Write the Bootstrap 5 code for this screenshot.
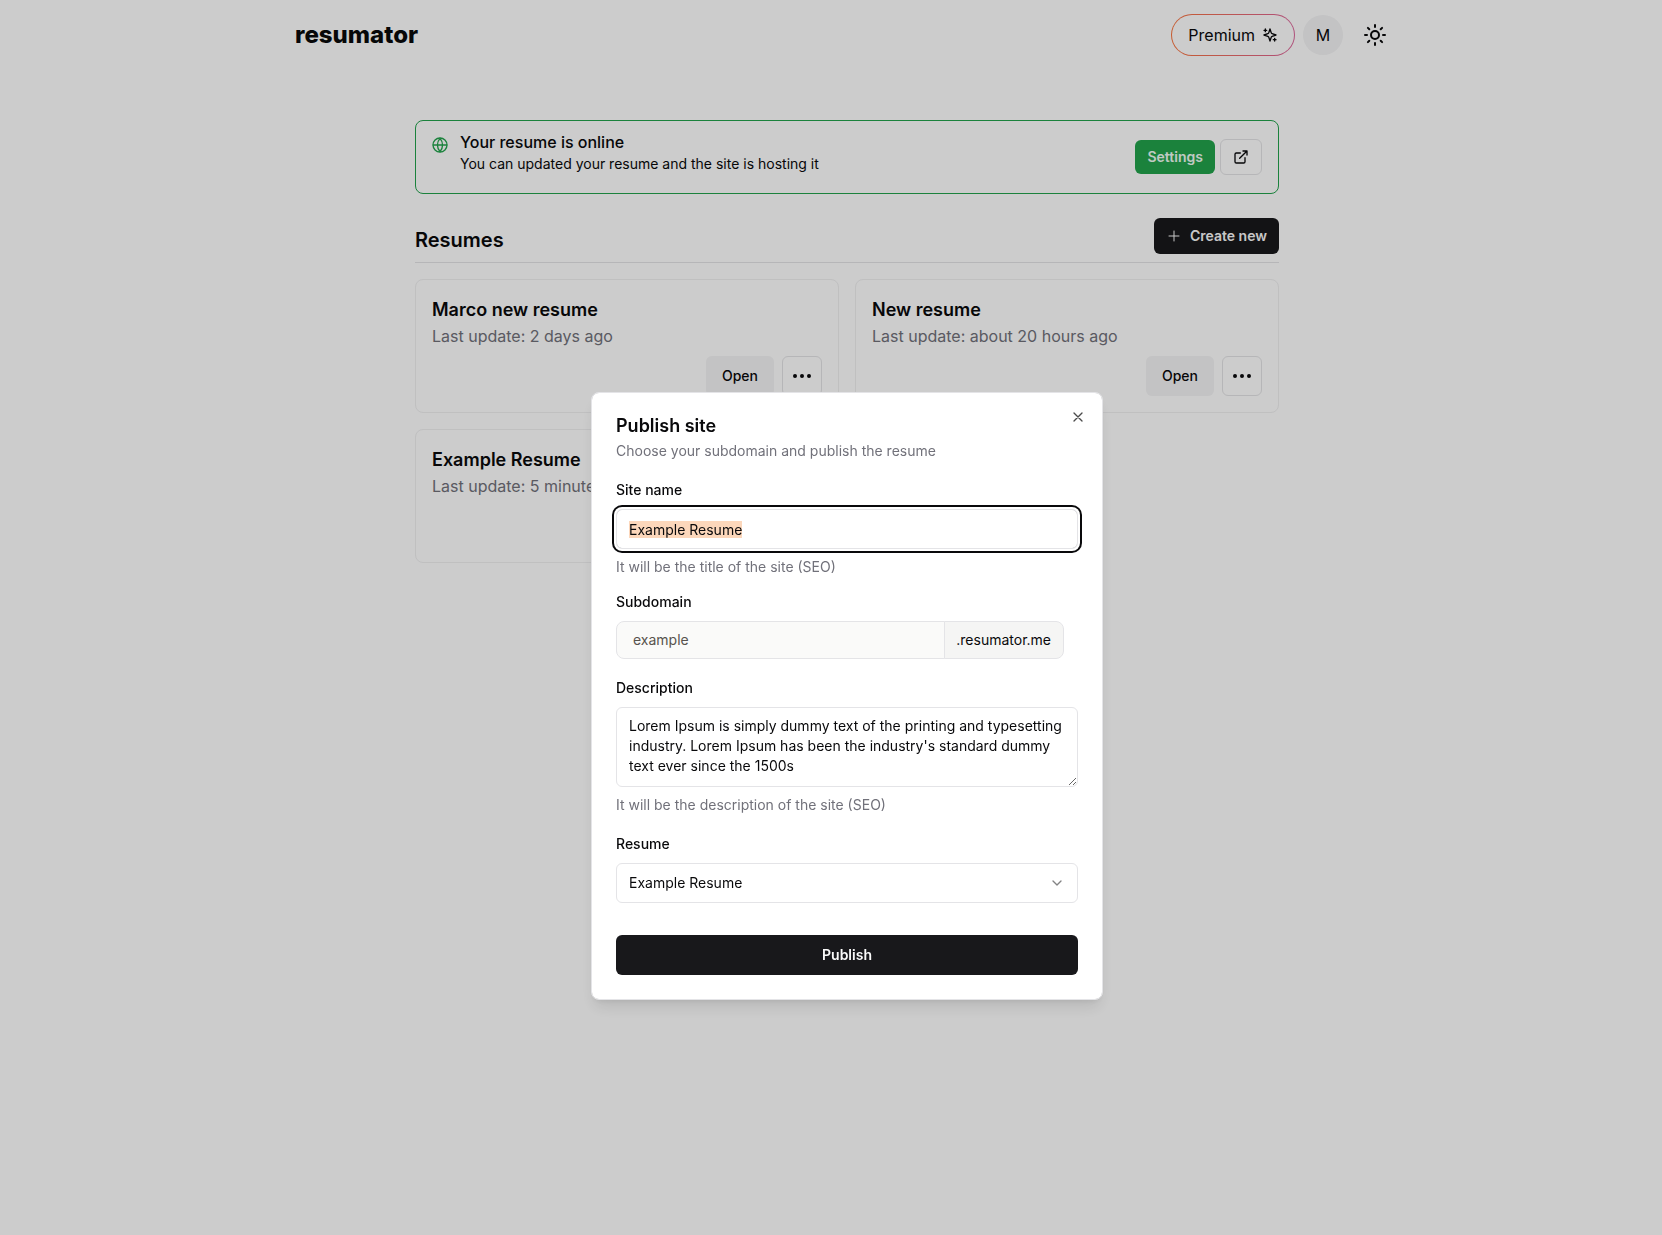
<!DOCTYPE html>
<html lang="en">
<head>
<meta charset="utf-8">
<meta name="viewport" content="width=device-width, initial-scale=1">
<title>resumator</title>
<link href="https://cdn.jsdelivr.net/npm/bootstrap@5.3.0/dist/css/bootstrap.min.css" rel="stylesheet">
<style>
  :root { --ink: #09090b; --dark: #18181b; --muted: #71717a; --line: #e4e4e7; --soft: #f4f4f5; --green: #22a34c; }
  body { font-family: Inter, "Liberation Sans", sans-serif; color: var(--ink); background: #fff; overflow: hidden; }
  svg { display: block; flex: none; fill: none; stroke: currentColor; stroke-width: 2; stroke-linecap: round; stroke-linejoin: round; }
  .thin-icon { stroke-width: 1; }
  .page-shell { padding-left: 32px; }
  .top-bar { max-width: 1104px; height: 70px; }
  .brand { font-size: 24px; font-weight: 800; color: var(--ink); }
  .btn { --bs-btn-font-size: 14px; --bs-btn-line-height: 20px; --bs-btn-font-weight: 500; --bs-btn-border-radius: 6px; --bs-btn-color: var(--ink); display: inline-flex; align-items: center; justify-content: center; gap: 8px; }
  .btn-premium { --bs-btn-font-size: 16px; --bs-btn-font-weight: 400; height: 42px; padding: 0 16px; gap: 7px; border: 1px solid transparent; border-radius: 21px;
    background: linear-gradient(#fff, #fff) padding-box, linear-gradient(90deg, #f9733c, #db649a) border-box; }
  .user-mark { width: 40px; height: 40px; border-radius: 50%; background: var(--soft); padding: 0; --bs-btn-font-size: 16px; --bs-btn-font-weight: 400; }
  .theme-toggle { width: 48px; height: 48px; padding: 0; }
  .content { max-width: 864px; padding-top: 50px; }
  .notice { border: 1px solid var(--green); border-radius: 8px; padding: 0 16px; }
  .notice-icon { color: var(--green); margin-top: 16px; }
  .notice-text { padding: 13px 0 19px; }
  .notice-title { font-size: 16px; line-height: 16px; font-weight: 500; margin: 0 0 4px; }
  .small-text { font-size: 14px; line-height: 20px; margin: 0; }
  .notice-actions { gap: 5px; }
  .btn-settings { height: 34px; padding: 0 11px; background: var(--green); --bs-btn-color: #f0fdf4; --bs-btn-font-weight: 600; }
  .btn-line { border: 1px solid var(--line); background: #fff; }
  .btn-visit { width: 42px; height: 36px; padding: 0; }
  .btn-ink { background: var(--dark); --bs-btn-color: #fafafa; --bs-btn-hover-bg: #27272a; --bs-btn-hover-color: #fff; --bs-btn-font-weight: 600; }
  .btn-create { height: 36px; padding: 0 11px; }
  .section-head { border-bottom: 1px solid var(--line); padding-bottom: 8px; margin: 24px 0 16px; }
  .section-title { font-size: 20px; line-height: 28px; font-weight: 600; margin: 0; }
  .resume-tile { border: 1px solid #f0f0f1; border-radius: 8px; padding: 16px; }
  .tile-title { font-size: 18px; line-height: 28px; font-weight: 600; margin: 0; }
  .tile-date { font-size: 16px; line-height: 24px; color: var(--muted); margin: 0 0 8px; }
  .btn-open { height: 40px; padding: 0 15px; background: var(--soft); }
  .btn-more { width: 40px; height: 40px; padding: 0; }
  .overlay { background: rgba(0,0,0,.2); padding-left: 32px; }
  .publish-dialog { max-width: 512px; margin: 392px auto 0; }
  .publish-box { border: 1px solid var(--line); border-radius: 8px; padding: 24px; color: var(--ink); box-shadow: 0 10px 15px -3px rgba(0,0,0,.1), 0 4px 6px -4px rgba(0,0,0,.1); }
  .dialog-title { font-size: 18px; line-height: 18px; font-weight: 600; margin: 0 0 6px; }
  .dialog-close { top: 16px; right: 16px; padding: 0; border: 0; background: none; opacity: .7; }
  .hint { color: var(--muted); }
  .field-label { display: block; font-size: 14px; line-height: 26px; height: 24px; font-weight: 500; margin-bottom: 8px; }
  .form-control, .form-select { font-size: 14px; line-height: 20px; padding: 8px 12px; border-color: var(--line); border-radius: 6px; color: var(--ink); }
  .form-control:focus { border-color: var(--line); color: var(--ink); box-shadow: 0 0 0 2px #fff, 0 0 0 4px var(--ink); }
  .line-field { height: 40px; }
  .form-control::selection { background: rgba(252,215,186,.99); color: var(--ink); }
  .group-domain { margin-top: 12px; padding-right: 14px; }
  .group-domain .form-control { height: 38px; padding: 7px 16px 9px; background: #fafaf9; color: #57534e; border-radius: 8px; }
  .group-domain .input-group-text { font-size: 14px; line-height: 20px; padding: 8px 12px 8px 11px; background: #f5f5f4; border-color: var(--line); color: var(--ink); border-radius: 8px; }
  .desc-field { height: 80px; overflow: hidden; resize: vertical; }
  .form-select { background-image: none; appearance: none; }
  .chevron { right: 13px; top: 12px; opacity: .5; pointer-events: none; }
  .btn-publish { height: 40px; margin-top: 32px; }
</style>
</head>
<body>
<div class="page-shell">
  <header class="top-bar mx-auto d-flex align-items-center justify-content-between">
    <a class="brand text-decoration-none" href="#">resumator</a>
    <div class="d-flex align-items-center gap-2">
      <button class="btn btn-premium" type="button">Premium
        <svg width="16" height="16" viewBox="0 0 24 24"><path d="m12 3-1.9 5.8a2 2 0 0 1-1.3 1.3L3 12l5.800 1.900a2 2 0 0 1 1.300 1.300L12 21l1.900-5.800a2 2 0 0 1 1.300-1.300L21 12l-5.800-1.900a2 2 0 0 1-1.300-1.300ZM5 3v4M19 17v4M3 5h4M17 19h4"/></svg>
      </button>
      <div class="d-flex align-items-center">
        <button class="btn user-mark me-2" type="button">M</button>
        <button class="btn theme-toggle" type="button" aria-label="Toggle theme">
          <svg width="24" height="24" viewBox="0 0 24 24"><circle cx="12" cy="12" r="4"/><path d="M12 2v2M12 20v2M4.900 4.900l1.400 1.400M17.700 17.700l1.400 1.400M2 12h2M20 12h2M6.300 17.700l-1.400 1.400M19.100 4.900l-1.400 1.400"/></svg>
        </button>
      </div>
    </div>
  </header>

  <main class="content mx-auto">
    <section class="notice d-flex align-items-center">
      <svg class="notice-icon align-self-start" width="16" height="16" viewBox="0 0 24 24"><circle cx="12" cy="12" r="10.500"/><path d="M12 2a15 15 0 0 0 0 20a15 15 0 0 0 0-20M2 12h20"/></svg>
      <div class="notice-text flex-grow-1 ms-2 ps-1">
        <h2 class="notice-title">Your resume is online</h2>
        <p class="small-text">You can updated your resume and the site is hosting it</p>
      </div>
      <div class="notice-actions d-flex align-items-center">
        <button class="btn btn-settings" type="button">Settings</button>
        <a class="btn btn-line btn-visit" href="#" aria-label="Open site">
          <svg width="16" height="16" viewBox="0 0 24 24"><path d="M18 13v6a2 2 0 0 1-2 2H5a2 2 0 0 1-2-2V8a2 2 0 0 1 2-2h6M15 3h6v6M10 14 21 3"/></svg>
        </a>
      </div>
    </section>

    <div class="section-head d-flex justify-content-between align-items-end">
      <h1 class="section-title">Resumes</h1>
      <button class="btn btn-ink btn-create" type="button">
        <svg class="thin-icon" width="16" height="16" viewBox="0 0 16 16"><path d="M8 3v10M3 8h10"/></svg>Create new
      </button>
    </div>

    <div class="row row-cols-2 g-3">
      <div class="col"><article class="resume-tile">
        <h2 class="tile-title">Marco new resume</h2>
        <p class="tile-date">Last update: 2 days ago</p>
        <div class="d-flex justify-content-end gap-2">
          <button class="btn btn-open" type="button">Open</button>
          <button class="btn btn-line btn-more" type="button" aria-label="More"><svg width="24" height="24" viewBox="0 0 24 24"><circle cx="5" cy="12" r="1"/><circle cx="12" cy="12" r="1"/><circle cx="19" cy="12" r="1"/></svg></button>
        </div>
      </article></div>
      <div class="col"><article class="resume-tile">
        <h2 class="tile-title">New resume</h2>
        <p class="tile-date">Last update: about 20 hours ago</p>
        <div class="d-flex justify-content-end gap-2">
          <button class="btn btn-open" type="button">Open</button>
          <button class="btn btn-line btn-more" type="button" aria-label="More"><svg width="24" height="24" viewBox="0 0 24 24"><circle cx="5" cy="12" r="1"/><circle cx="12" cy="12" r="1"/><circle cx="19" cy="12" r="1"/></svg></button>
        </div>
      </article></div>
      <div class="col"><article class="resume-tile">
        <h2 class="tile-title">Example Resume</h2>
        <p class="tile-date">Last update: 5 minutes ago</p>
        <div class="d-flex justify-content-end gap-2">
          <button class="btn btn-open" type="button">Open</button>
          <button class="btn btn-line btn-more" type="button" aria-label="More"><svg width="24" height="24" viewBox="0 0 24 24"><circle cx="5" cy="12" r="1"/><circle cx="12" cy="12" r="1"/><circle cx="19" cy="12" r="1"/></svg></button>
        </div>
      </article></div>
    </div>
  </main>
</div>

<div class="modal d-block overlay" role="dialog" aria-modal="true" aria-labelledby="dialogTitle">
  <div class="modal-dialog publish-dialog">
    <form class="modal-content publish-box">
      <h2 class="dialog-title" id="dialogTitle">Publish site</h2>
      <p class="small-text hint mb-3">Choose your subdomain and publish the resume</p>
      <button class="dialog-close position-absolute" type="button" aria-label="Close">
        <svg width="16" height="16" viewBox="0 0 24 24"><path d="M18 6 6 18M6 6l12 12"/></svg>
      </button>

      <div>
        <label class="field-label" for="siteName">Site name</label>
        <input class="form-control line-field" id="siteName" type="text" value="Example Resume">
        <p class="small-text hint mt-2">It will be the title of the site (SEO)</p>
      </div>

      <div class="group-domain">
        <label class="field-label" for="subdomain">Subdomain</label>
        <div class="input-group">
          <input class="form-control" id="subdomain" type="text" value="example">
          <span class="input-group-text">.resumator.me</span>
        </div>
      </div>

      <div class="mt-3">
        <label class="field-label" for="description">Description</label>
        <textarea class="form-control desc-field" id="description">Lorem Ipsum is simply dummy text of the printing and typesetting industry. Lorem Ipsum has been the industry's standard dummy text ever since the 1500s</textarea>
        <p class="small-text hint mt-2">It will be the description of the site (SEO)</p>
      </div>

      <div class="mt-3">
        <label class="field-label" for="resume">Resume</label>
        <div class="position-relative">
          <select class="form-select line-field" id="resume"><option>Example Resume</option><option>New resume</option><option>Marco new resume</option></select>
          <svg class="chevron position-absolute" width="16" height="16" viewBox="0 0 24 24"><path d="m6 9 6 6 6-6"/></svg>
        </div>
      </div>

      <button class="btn btn-ink btn-publish w-100" type="submit">Publish</button>
    </form>
  </div>
</div>
<script src="https://cdn.jsdelivr.net/npm/bootstrap@5.3.0/dist/js/bootstrap.bundle.min.js"></script>
<script>
  const siteName = document.getElementById('siteName');
  siteName.focus({ preventScroll: true });
  siteName.select();
</script>
</body>
</html>
